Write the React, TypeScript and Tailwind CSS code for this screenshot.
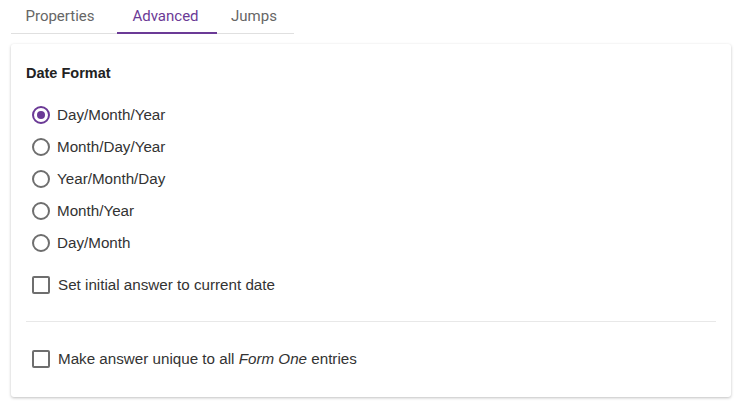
import React from "react";

const body = { fontFamily: "'Liberation Sans', Arial, sans-serif" };

const Radio = ({ checked, label }: { checked?: boolean; label: string }) => (
  <div className="flex items-center h-[32px]">
    <div
      className={`w-[18px] h-[18px] rounded-full border-2 flex items-center justify-center ml-[6px] ${
        checked ? "border-[#6b3a96]" : "border-[#6e6e6e]"
      }`}
    >
      {checked && <div className="w-[8px] h-[8px] rounded-full bg-[#6b3a96]" />}
    </div>
    <span className="ml-[7px] text-[15.2px] text-[#333]" style={body}>
      {label}
    </span>
  </div>
);

const Check = ({ children }: { children: React.ReactNode }) => (
  <div className="flex items-center h-[32px]">
    <div className="w-[18px] h-[18px] rounded-[2px] border-2 border-[#6e6e6e] ml-[6px]" />
    <span className="ml-[8px] text-[15.2px] text-[#333]" style={body}>
      {children}
    </span>
  </div>
);

export default function App() {
  return (
    <div
      className="w-[741px] h-[410px] bg-white"
      style={{ fontFamily: "Roboto, 'Liberation Sans', Arial, sans-serif" }}
    >
      <div className="pl-[11px] pt-[0px]">
        <div className="flex w-[283px] border-b border-[#e0e0e0] h-[34px]">
          <div className="w-[106px] flex items-center justify-center pr-[8px] text-[15px] text-[#666]">
            Properties
          </div>
          <div className="w-[100px] flex items-center justify-center pr-[3px] text-[15px] text-[#6b3a96] border-b-2 border-[#6b3a96] -mb-px">
            Advanced
          </div>
          <div className="w-[77px] flex items-center justify-center pr-[3px] text-[15px] text-[#666]">
            Jumps
          </div>
        </div>
      </div>
      <div className="mx-[11px] mt-[10px] w-[720px] h-[353px] rounded-[3px] bg-white shadow-[0_1px_3px_rgba(0,0,0,0.25)] px-[15px] pt-[20px]">
        <div className="text-[14.5px] font-bold text-[#222] leading-[18px]" style={body}>
          Date Format
        </div>
        <div className="mt-[17px] flex flex-col">
          <Radio checked label="Day/Month/Year" />
          <Radio label="Month/Day/Year" />
          <Radio label="Year/Month/Day" />
          <Radio label="Month/Year" />
          <Radio label="Day/Month" />
        </div>
        <div className="mt-[10px]">
          <Check>Set initial answer to current date</Check>
        </div>
        <div className="mt-[20px] border-t border-[#e8e8e8]" />
        <div className="mt-[21px]">
          <Check>
            Make answer unique to all <i>Form One</i> entries
          </Check>
        </div>
      </div>
    </div>
  );
}
